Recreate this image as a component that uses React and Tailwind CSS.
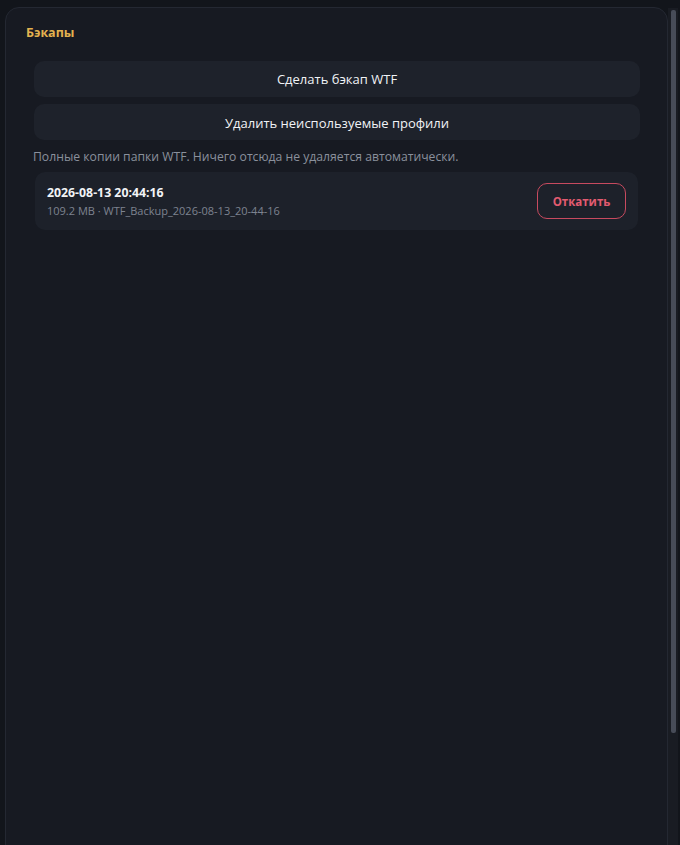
import React from "react";

function App() {
  return (
    <div
      className="flex h-[845px] w-[680px] overflow-hidden bg-[#12151b]"
      style={{ fontFamily: '"Open Sans", "Noto Sans", sans-serif' }}
    >
      <div className="ml-[5px] mt-[7px] h-[860px] w-[663px] rounded-t-[14px] border border-[#242832] bg-[#171a22] px-[20px] pt-[16px]">
        <div className="text-[12.5px] font-bold leading-[18px] text-[#e3b24f]">Бэкапы</div>

        <div className="mt-[19px] flex flex-col gap-[7px] pl-[8px] pr-[7px]">
          <button
            type="button"
            className="h-[36px] w-full rounded-[10px] bg-[#1e222b] pt-[2px] text-[13px] text-[#f1f3f6]"
          >
            Сделать бэкап WTF
          </button>
          <button
            type="button"
            className="h-[36px] w-full rounded-[10px] bg-[#1e222b] pt-[3px] text-[13px] text-[#f1f3f6]"
          >
            Удалить неиспользуемые профили
          </button>
        </div>

        <div className="mt-[8px] pl-[7px] text-[12.2px] leading-[18px] text-[#8a909c]">
          Полные копии папки WTF. Ничего отсюда не удаляется автоматически.
        </div>

        <div className="ml-[9px] mr-[9px] mt-[6px] flex h-[58px] items-center justify-between rounded-[10px] bg-[#1d212a] pl-[12px] pr-[12px]">
          <div className="flex flex-col">
            <span className="text-[12.3px] font-bold leading-[18px] text-[#f1f3f6]">2026-08-13 20:44:16</span>
            <span className="mt-[1px] text-[11px] leading-[16px] text-[#7d8390]">
              109.2 MB · WTF_Backup_2026-08-13_20-44-16
            </span>
          </div>
          <button
            type="button"
            className="h-[36px] w-[89px] rounded-[10px] border border-[#c74a5f] pt-[2px] text-[11.5px] font-bold text-[#e25b70]"
          >
            Откатить
          </button>
        </div>
      </div>

      <div className="mt-[8px] flex h-[837px] w-[10px] justify-center bg-[#191c23]">
        <div className="mt-[2px] h-[723px] w-[5px] rounded-[2px] bg-[#474c58]"></div>
      </div>
    </div>
  );
}

export default App;
